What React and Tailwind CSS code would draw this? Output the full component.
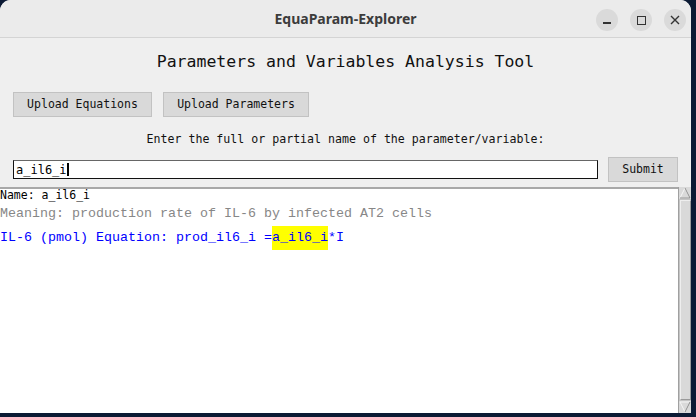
export default function App() {
  const ui = { fontFamily: '"DejaVu Sans Mono", monospace' };
  const mono = { fontFamily: '"Liberation Mono", monospace' };
  return (
    <div className="w-[696px] h-[417px] bg-[#0b1a34] overflow-hidden">
      <div className="w-[691px] h-[413px] rounded-t-[11px] bg-[#efefef] flex flex-col overflow-hidden">
        {/* title bar */}
        <div className="h-[38px] shrink-0 bg-[#ebebeb] border-b border-[#d4d4d4] relative flex items-center justify-center">
          <span
            className="text-[14px] font-bold text-[#3c3c3c]"
            style={{ fontFamily: '"Noto Sans", sans-serif' }}
          >
            EquaParam-Explorer
          </span>
          <div className="absolute right-[5px] top-[9px] flex gap-[12px]">
            <div className="w-[22px] h-[22px] rounded-full bg-[#dadada] flex items-center justify-center">
              <div className="w-[8px] h-[1.5px] bg-[#333] mt-[6px]" />
            </div>
            <div className="w-[22px] h-[22px] rounded-full bg-[#dadada] flex items-center justify-center">
              <div className="w-[9px] h-[9px] border-[1.3px] border-[#333]" />
            </div>
            <div className="w-[22px] h-[22px] rounded-full bg-[#dadada] flex items-center justify-center">
              <svg width="10" height="10" viewBox="0 0 10 10">
                <path d="M1 1L9 9M9 1L1 9" stroke="#333" strokeWidth="1.4" />
              </svg>
            </div>
          </div>
        </div>

        {/* heading */}
        <div className="h-[48px] shrink-0 flex items-center justify-center">
          <span className="text-[16.5px] text-[#111]" style={ui}>
            Parameters and Variables Analysis Tool
          </span>
        </div>

        {/* buttons */}
        <div className="mt-[6px] h-[25px] shrink-0 flex gap-[11px] pl-[13px]">
          <div
            className="w-[139px] h-[25px] bg-[#d9d9d9] border border-[#c2c2c2] flex items-center justify-center text-[11.5px] text-[#111]"
            style={ui}
          >
            Upload Equations
          </div>
          <div
            className="w-[146px] h-[25px] bg-[#d9d9d9] border border-[#c2c2c2] flex items-center justify-center text-[11.5px] text-[#111]"
            style={ui}
          >
            Upload Parameters
          </div>
        </div>

        {/* label */}
        <div className="h-[40px] shrink-0 pt-[6px] flex items-center justify-center">
          <span className="text-[11.6px] text-[#111]" style={ui}>
            Enter the full or partial name of the parameter/variable:
          </span>
        </div>

        {/* entry row */}
        <div className="h-[25px] shrink-0 flex items-center pl-[13px]">
          <div className="w-[585px] h-[19px] bg-white border border-[#111] border-t-[#666] flex items-center pl-[2px]">
            <span className="text-[12px] text-black" style={ui}>a_il6_i</span>
            <div className="w-[2px] h-[13px] bg-black" />
          </div>
          <div
            className="ml-[10px] w-[70px] h-[25px] bg-[#d9d9d9] border border-[#c2c2c2] flex items-center justify-center text-[11.5px] text-[#111]"
            style={ui}
          >
            Submit
          </div>
        </div>

        {/* text area */}
        <div className="mt-[5px] flex-1 flex">
          <div className="flex-1 bg-white border-t-2 border-[#a8a8a8] flex flex-col">
            <div className="h-[13px] leading-[13px] text-[11.5px] text-black pl-[0px]" style={ui}>
              Name: a_il6_i
            </div>
            <div className="h-[24px] leading-[24px] text-[13.33px] text-[#878787] whitespace-pre" style={mono}>
              Meaning: production rate of IL-6 by infected AT2 cells
            </div>
            <div className="h-[24px] leading-[24px] text-[13.33px] text-[#0000ff] whitespace-pre flex" style={mono}>
              <span>IL-6 (pmol) Equation: prod_il6_i =</span>
              <span className="bg-[#ffff00] h-[24px]">a_il6_i</span>
              <span>*I</span>
            </div>
          </div>
          <div className="w-[13px] bg-[#c4c4c4] border-l border-[#a0a0a0] flex flex-col items-center">
            <svg width="12" height="12" viewBox="0 0 12 12" className="shrink-0">
              <rect x="0" y="0" width="12" height="12" fill="#d9d9d9" />
              <path d="M6 1L11 11H1Z" fill="#d9d9d9" stroke="#f5f5f5" strokeWidth="1" />
              <path d="M11 11H1" stroke="#8a8a8a" strokeWidth="1" />
              <path d="M6 1L11 11" stroke="#8a8a8a" strokeWidth="1" />
            </svg>
            <div className="flex-1 w-[11px] bg-[#d9d9d9] border border-[#eeeeee] border-r-[#999] border-b-[#999] my-[1px]" />
            <svg width="12" height="12" viewBox="0 0 12 12" className="shrink-0">
              <rect x="0" y="0" width="12" height="12" fill="#d9d9d9" />
              <path d="M1 1H11L6 11Z" fill="#d9d9d9" stroke="#f5f5f5" strokeWidth="1" />
              <path d="M11 1L6 11" stroke="#8a8a8a" strokeWidth="1" />
            </svg>
          </div>
        </div>
      </div>
    </div>
  );
}
